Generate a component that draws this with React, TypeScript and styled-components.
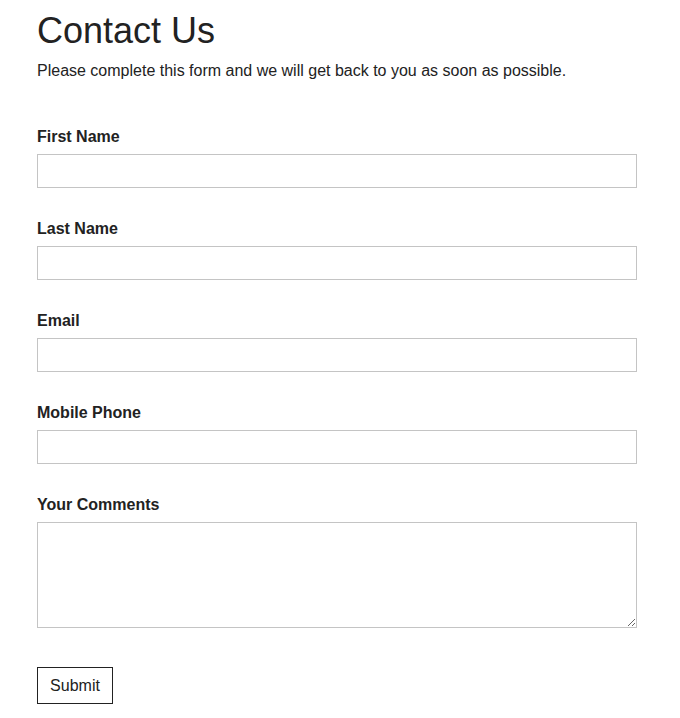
import React from 'react';
import styled, { createGlobalStyle } from 'styled-components';

const GlobalStyle = createGlobalStyle`
  body {
    margin: 0;
    background: #fff;
    font-family: "Liberation Sans", Arial, Helvetica, sans-serif;
    color: #222;
  }
`;

const Page = styled.div`
  padding: 9px 43px 20px 37px;
  width: 600px;
`;

const Title = styled.h1`
  margin: 0;
  font-size: 36px;
  font-weight: 400;
  line-height: 44px;
`;

const Intro = styled.p`
  margin: 8px 0 0;
  font-size: 16px;
  line-height: 20px;
`;

const Form = styled.form`
  display: flex;
  flex-direction: column;
  gap: 31px;
  margin-top: 46px;
`;

const Field = styled.div`
  display: flex;
  flex-direction: column;
  gap: 8px;
`;

const Label = styled.label`
  font-size: 16px;
  font-weight: 700;
  line-height: 19px;
`;

const Input = styled.input`
  box-sizing: border-box;
  width: 600px;
  height: 34px;
  margin: 0;
  border: 1px solid #c4c4c4;
  border-radius: 0;
  padding: 6px 8px;
  font: inherit;
`;

const TextArea = styled.textarea`
  box-sizing: border-box;
  width: 600px;
  height: 106px;
  margin: 0;
  border: 1px solid #c4c4c4;
  border-radius: 0;
  padding: 6px 8px;
  font: inherit;
  resize: vertical;
`;

const SubmitButton = styled.button`
  align-self: flex-start;
  margin-top: 8px;
  width: 76px;
  height: 37px;
  border: 1px solid #222;
  border-radius: 0;
  background: #fff;
  color: #222;
  font-family: inherit;
  font-size: 16px;
  cursor: pointer;
`;

const fields = [
  { id: 'first', label: 'First Name', type: 'text' },
  { id: 'last', label: 'Last Name', type: 'text' },
  { id: 'email', label: 'Email', type: 'email' },
  { id: 'phone', label: 'Mobile Phone', type: 'tel' },
];

export default function App() {
  return (
    <>
      <GlobalStyle />
      <Page>
        <Title>Contact Us</Title>
        <Intro>Please complete this form and we will get back to you as soon as possible.</Intro>
        <Form onSubmit={(e) => e.preventDefault()}>
          {fields.map((f) => (
            <Field key={f.id}>
              <Label htmlFor={f.id}>{f.label}</Label>
              <Input id={f.id} type={f.type} />
            </Field>
          ))}
          <Field>
            <Label htmlFor="comments">Your Comments</Label>
            <TextArea id="comments" />
          </Field>
          <SubmitButton type="submit">Submit</SubmitButton>
        </Form>
      </Page>
    </>
  );
}
